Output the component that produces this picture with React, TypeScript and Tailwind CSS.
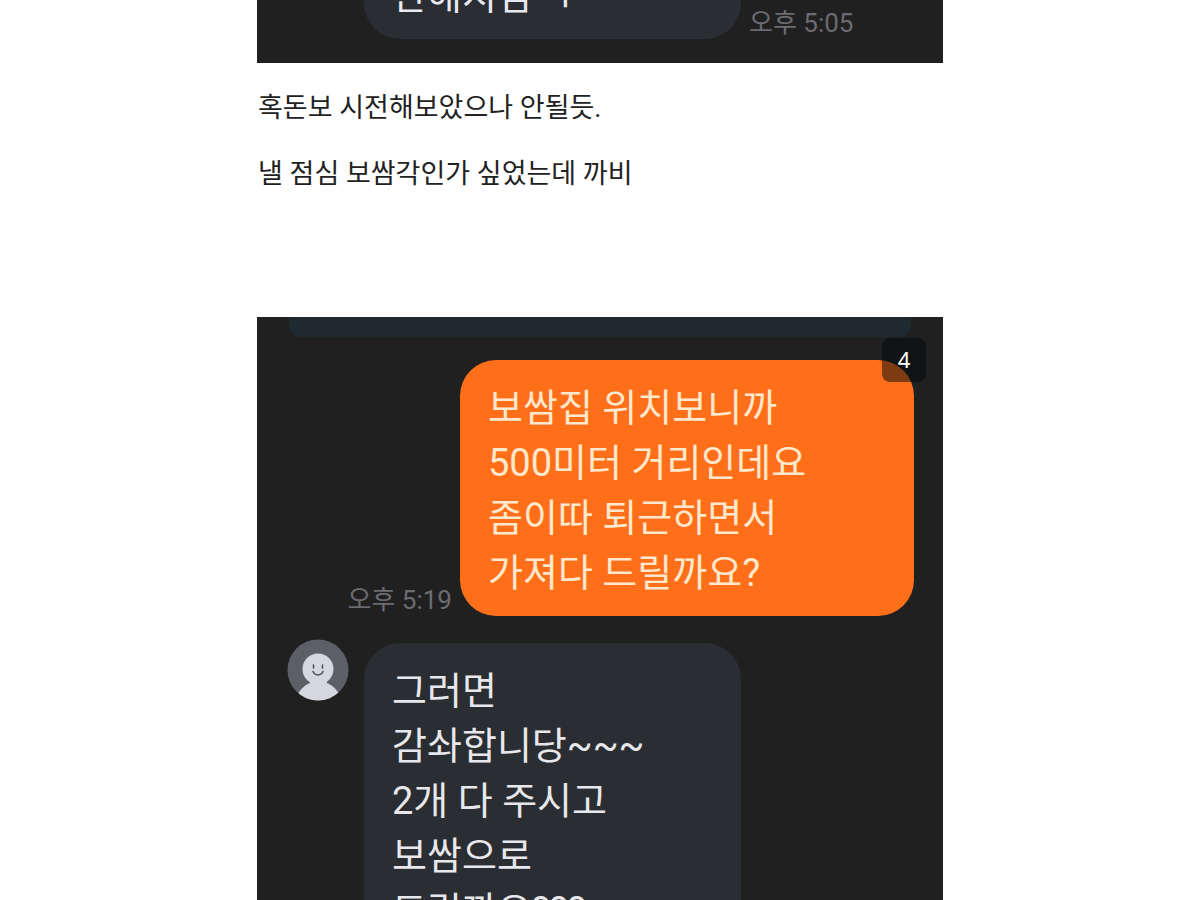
import React from 'react';

interface BubbleProps {
  lines: string[];
  className: string;
}

const Bubble: React.FC<BubbleProps> = ({ lines, className }) => (
  <div
    className={`shrink-0 rounded-[36px] px-7 pt-[21px] pb-[15px] text-[38px] leading-[55px] whitespace-nowrap ${className}`}
  >
    {lines.map((line) => (
      <p key={line}>{line}</p>
    ))}
  </div>
);

const Time: React.FC<{ children: string }> = ({ children }) => (
  <time className="text-[26px] leading-8 whitespace-nowrap text-[#6b6b70]">{children}</time>
);

const Avatar = () => (
  <svg viewBox="0 0 62 62" className="-mt-1 w-[62px] h-[62px] shrink-0" role="img" aria-label="프로필">
    <defs>
      <clipPath id="avatar">
        <circle cx="31" cy="31" r="30.5" />
      </clipPath>
    </defs>
    <circle cx="31" cy="31" r="30.5" fill="#5c5f66" />
    <g clipPath="url(#avatar)" fill="#d6d7dc">
      <path d="M9 62c1-9 7-15 14-18l1-3h15l1 3c7 3 13 9 14 18z" />
      <circle cx="31" cy="30" r="15.5" />
    </g>
    <g stroke="#4b4d53" strokeWidth="1.5" strokeLinecap="round" fill="none">
      <path d="M26.500 26v3M35.500 26v3M26 32.500c2 4.500 8 4.500 10 0" />
    </g>
  </svg>
);

export default function App() {
  return (
    <main
      lang="ko"
      className="h-screen overflow-hidden bg-white font-['Roboto','Noto_Sans_CJK_KR',sans-serif] text-[#222]"
    >
      <article className="mx-auto max-w-[686px]">
        {/* End of the first chat */}
        <section className="flex h-[63px] items-end overflow-hidden bg-[#202020] pb-6 pl-[107px]">
          <Bubble lines={['안해지심^ㅜ']} className="w-[377px] bg-[#2a2d32] text-[#e8e8f0]" />
          <div className="ml-2">
            <Time>오후 5:05</Time>
          </div>
        </section>

        <div className="pt-[29px] pb-[25px] pl-px text-[27px] leading-[33px]">
          <p className="mb-[33px]">혹돈보 시전해보았으나 안될듯.</p>
          <p>낼 점심 보쌈각인가 싶었는데 까비</p>
        </div>

        {/* Second chat */}
        <section className="relative mt-[101px] bg-[#202020]">
          <div className="mx-8 h-5 rounded-b-xl bg-[#1e2a2f]" />
          <span className="absolute top-[21px] right-[17px] flex h-11 w-11 items-center justify-center rounded-lg bg-[#00070c]/50 pb-0.5 font-['Noto_Sans'] text-[22px] text-white">
            4
          </span>
          <div className="flex items-end justify-end gap-2 pt-[23px] pr-[29px]">
            <Time>오후 5:19</Time>
            <Bubble
              lines={['보쌈집 위치보니까', '500미터 거리인데요', '좀이따 퇴근하면서', '가져다 드릴까요?']}
              className="w-[454px] bg-[#ff6f1a] text-[#ffe8cc]"
            />
          </div>
          <div className="mt-[27px] flex items-start pl-[30px]">
            <Avatar />
            <Bubble
              lines={['그러면', '감솨합니당~~~', '2개 다 주시고', '보쌈으로', '드릴까요???']}
              className="ml-[15px] w-[377px] bg-[#2a2d32] text-[#e8e8ec]"
            />
          </div>
        </section>
      </article>
    </main>
  );
}
